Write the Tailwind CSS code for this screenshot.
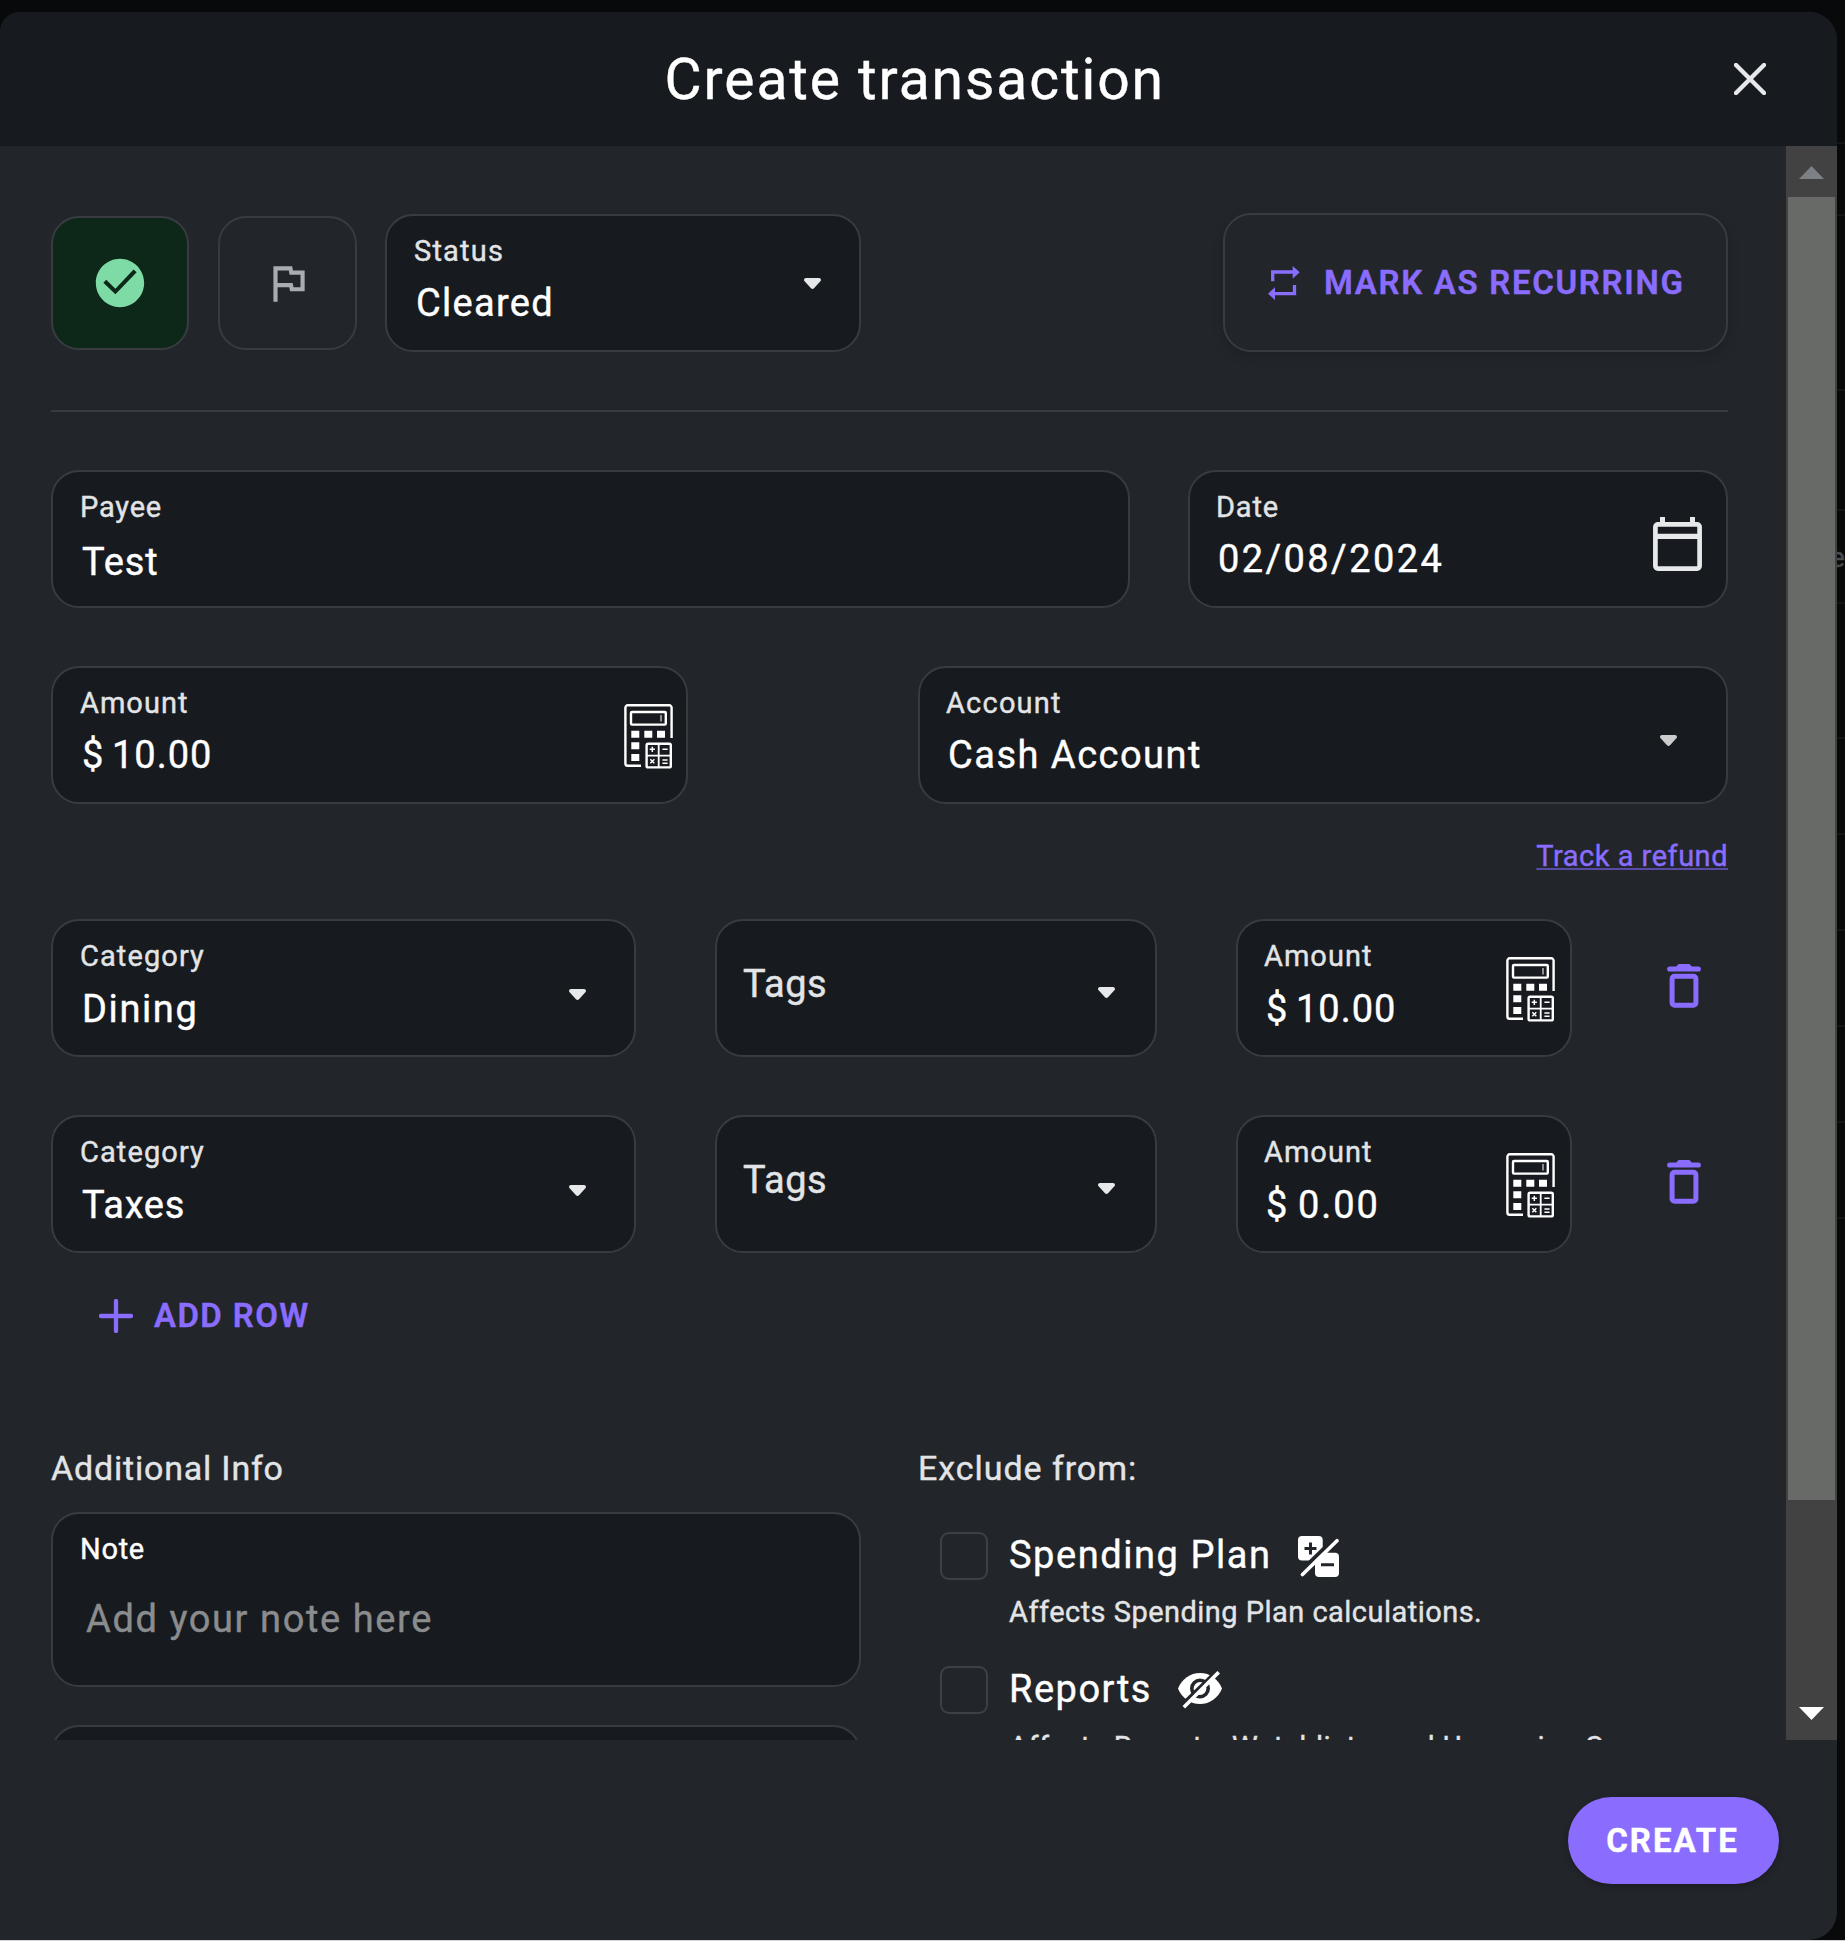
<!DOCTYPE html>
<html lang="en">
<head>
<meta charset="utf-8">
<title>Create transaction</title>
<script src="https://cdn.jsdelivr.net/npm/@tailwindcss/browser@4"></script>
</head>
<body class="h-[1941px] w-[1845px] overflow-hidden bg-[#08090b] font-['Roboto',sans-serif] [-webkit-text-stroke-width:0.4px]">
<svg class="hidden">
  <symbol id="calc" viewBox="0 0 49 65">
    <g fill="none" stroke="#fff" stroke-width="2.4">
      <path d="M47.600 34V3.600a2.300 2.300 0 0 0-2.300-2.300H3.700a2.300 2.300 0 0 0-2.300 2.300V59.400a2.300 2.300 0 0 0 2.300 2.300H17"/>
      <rect x="7" y="8" width="34.800" height="12.600" rx="1"/>
      <rect x="22.600" y="39.800" width="24.200" height="23.600" rx="1.500"/>
      <path d="M34.700 39.800v23.600M22.600 51.600h24.200" stroke-width="1.800"/>
      <path d="M28.300 42.700v5.200M25.700 45.300h5.200M38.400 45.300h5.200M26.300 55.300l4 4M30.300 55.300l-4 4M38.400 56h5.200M38.400 59.200h5.200" stroke-width="1.500"/>
      <path d="M37 11v6.500" stroke="#9a9c9e" stroke-width="1.800"/>
    </g>
    <path fill="#fff" d="M7.300 26.700h8v7h-8zM20.300 26.700h8v7h-8zM33 26.700h8v7h-8zM7.300 38.300h8v7h-8zM7.300 50h8v7h-8z"/>
  </symbol>
  <symbol id="caret" viewBox="0 0 17 11"><path fill="currentColor" d="M2 0h13c1.800 0 2.600 2 1.400 3.300L10 10.200c-.8.900-2.200.9-3 0L.6 3.300C-.6 2 .2 0 2 0z"/></symbol>
  <symbol id="trash" viewBox="0 0 34 44">
    <g fill="none" stroke="#8a6dff"><path d="M2.700 5h28.600" stroke-width="5.200" stroke-linecap="round"/><rect x="5.100" y="12.200" width="23.800" height="29" rx="2.500" stroke-width="5"/></g>
    <path fill="#8a6dff" d="M9 3l2.500-3h11L25 3z"/>
  </symbol>
</svg>
<div class="relative flex h-full flex-col justify-end">
  <!-- dimmed page behind the dialog -->
  <div class="absolute top-0 right-0 h-full w-2 overflow-hidden">
    <div class="absolute top-[142px] h-[2px] w-full bg-[#141517]"></div>
    <div class="absolute top-[214px] h-[2px] w-full bg-[#141517]"></div>
    <div class="absolute top-[389px] h-[2px] w-full bg-[#141517]"></div>
    <div class="absolute top-[509px] h-[2px] w-full bg-[#141517]"></div>
    <div class="absolute top-[602px] h-[2px] w-full bg-[#141517]"></div>
    <div class="absolute top-[737px] h-[2px] w-full bg-[#141517]"></div>
    <div class="absolute top-[833px] h-[2px] w-full bg-[#141517]"></div>
    <div class="absolute top-[929px] h-[2px] w-full bg-[#141517]"></div>
    <div class="absolute top-[1025px] h-[2px] w-full bg-[#141517]"></div>
    <div class="absolute top-[1121px] h-[2px] w-full bg-[#141517]"></div>
    <div class="absolute top-[1217px] h-[2px] w-full bg-[#141517]"></div>
    <div class="absolute top-[541px] -left-[7px] text-[28px] leading-[34px] text-[#4a4c4f]">e</div>
  </div>
  <div class="relative flex h-[1928px] w-[1837px] flex-col overflow-hidden rounded-r-[28px] rounded-tl-[20px] bg-[#22252a]">
    <header class="flex h-[134px] shrink-0 items-center justify-end bg-[#171a1e] pr-[71px]">
      <h1 class="mt-[2px] mr-[569px] whitespace-nowrap text-[57px] leading-[68px] tracking-[1.9px] text-white">Create transaction</h1>
      <svg class="size-[32px]" viewBox="0 0 32 32"><path d="M2 2l28 28M30 2L2 30" stroke="#e6e8ea" stroke-width="4.400" stroke-linecap="round"/></svg>
    </header>
    <div class="flex h-[1594px] shrink-0 overflow-hidden">
      <main class="flex w-[1786px] flex-col pt-[67px] pr-[58px] pl-[51px]">
        <div class="flex h-[139px] items-center">
          <button class="flex h-[134px] w-[138px] items-center justify-center rounded-[28px] border-2 border-[#383b3f] bg-[#0d2818]"><svg class="size-[58px]" viewBox="0 0 24 24" fill="#7fdba5"><path d="M12 2C6.500 2 2 6.500 2 12s4.500 10 10 10 10-4.500 10-10S17.500 2 12 2zm-1.900 14.700L5.100 11.900l1.200-1.200 3.800 3.700 7.500-8 1.300 1.200z"/></svg></button>
          <button class="ml-[29px] flex h-[134px] w-[139px] items-center justify-center rounded-[28px] border-2 border-[#383b3f]"><svg class="size-[50px]" viewBox="0 0 24 24" fill="#a9adb1"><path d="m12.360 6 .4 2H18v6h-3.360l-.4-2H7V6h5.360M14 4H5v17h2v-7h5.600l.4 2h7V6h-5.600L14 4z"/></svg></button>
          <div class="ml-[28px] flex h-[138px] w-[476px] justify-between rounded-[28px] border-2 border-[#383b3f] bg-[#171a1e] pt-[19px] pr-[38px] pl-[27px]">
            <div><span class="block w-max text-[29px] leading-[32px] tracking-[1.2px] text-[#e2e4e6]">Status</span><span class="mt-[14px] ml-[2px] block w-max text-[38px] leading-[44px] tracking-[1.3px] text-white">Cleared</span></div>
            <svg class="mt-[43px] h-[11px] w-[17px] text-[#e6e8ea]"><use href="#caret"/></svg>
          </div>
          <button class="ml-auto flex h-[139px] w-[505px] items-center rounded-[28px] border-2 border-[#383b3f] pl-[43px] shadow-[0_4px_12px_rgba(0,0,0,0.15)]">
            <svg class="h-[34px] w-[32px]" viewBox="0 0 32 34"><path d="M4.700 15.300V6H25M26.500 19v8.700H7" fill="none" stroke="#8a6dff" stroke-width="3.300"/><path fill="#8a6dff" d="M24.700 0l7 6.300-7 6.400zM7 21.300l-7 6.400L7 34z"/></svg>
            <span class="ml-[24px] whitespace-nowrap text-[33px] leading-[40px] font-semibold tracking-[1.7px] text-[#8a6dff]">MARK AS RECURRING</span>
          </button>
        </div>
        <div class="mt-[58px] h-[2px] shrink-0 bg-[#383b3f]"></div>

        <div class="mt-[58px] flex justify-between">
          <div class="h-[138px] w-[1079px] rounded-[28px] border-2 border-[#383b3f] bg-[#171a1e] pt-[19px] pl-[27px]">
            <span class="block w-max text-[29px] leading-[32px] tracking-[0.8px] text-[#e2e4e6]">Payee</span><span class="mt-[17px] ml-[2px] block w-max text-[38px] leading-[44px] tracking-[0.9px] text-white">Test</span>
          </div>
          <div class="flex h-[138px] w-[540px] justify-between rounded-[28px] border-2 border-[#383b3f] bg-[#171a1e] pt-[19px] pr-[24px] pl-[26px]">
            <div><span class="block w-max text-[29px] leading-[32px] tracking-[0.8px] text-[#e2e4e6]">Date</span><span class="mt-[14px] ml-[2px] block w-max text-[38px] leading-[44px] tracking-[2.4px] text-white">02/08/2024</span></div>
            <svg class="mt-[26px] h-[54px] w-[49px]" viewBox="0 0 49 54"><rect x="2.400" y="7.400" width="44.200" height="44.200" rx="2.500" fill="none" stroke="#e6e8ea" stroke-width="4.700"/><path fill="#e6e8ea" d="M7 0h5v7H7zM37 0h5v7h-5zM2 16.700h45V22H2z"/></svg>
          </div>
        </div>

        <div class="mt-[58px] flex justify-between">
          <div class="flex h-[138px] w-[637px] justify-between rounded-[28px] border-2 border-[#383b3f] bg-[#171a1e] pt-[19px] pr-[13px] pl-[27px]">
            <div><span class="block w-max text-[29px] leading-[32px] tracking-[1px] text-[#e2e4e6]">Amount</span><div class="mt-[14px] ml-[2px] flex text-[38px] leading-[44px] text-white"><span class="w-[30px]">$</span><span class="tracking-[1px]">10.00</span></div></div>
            <svg class="mt-[17px] h-[65px] w-[49px]"><use href="#calc"/></svg>
          </div>
          <div class="flex h-[138px] w-[810px] justify-between rounded-[28px] border-2 border-[#383b3f] bg-[#171a1e] pt-[19px] pr-[49px] pl-[26px]">
            <div><span class="block w-max text-[29px] leading-[32px] tracking-[1.2px] text-[#e2e4e6]">Account</span><span class="mt-[14px] ml-[2px] block w-max text-[38px] leading-[44px] tracking-[1.5px] text-white">Cash Account</span></div>
            <svg class="mt-[48px] h-[11px] w-[17px] text-[#cccccc]"><use href="#caret"/></svg>
          </div>
        </div>

        <div class="mt-[35px] flex h-[34px] justify-end"><a class="text-[29px] leading-[34px] tracking-[0.5px] text-[#8a6dff] underline decoration-[#5a4aa8] decoration-2 underline-offset-2">Track a refund</a></div>

        <div class="mt-[46px] flex">
          <div class="flex h-[138px] w-[585px] justify-between rounded-[28px] border-2 border-[#383b3f] bg-[#171a1e] pt-[19px] pr-[48px] pl-[27px]">
            <div><span class="block w-max text-[29px] leading-[32px] tracking-[1.1px] text-[#e2e4e6]">Category</span><span class="mt-[15px] ml-[2px] block w-max text-[38px] leading-[44px] tracking-[1.6px] text-white">Dining</span></div>
            <svg class="mt-[49px] h-[11px] w-[17px] text-[#e6e8ea]"><use href="#caret"/></svg>
          </div>
          <div class="ml-[79px] flex h-[138px] w-[442px] justify-between rounded-[28px] border-2 border-[#383b3f] bg-[#171a1e] pr-[40px] pl-[26px]">
            <span class="mt-[41px] block h-max w-max text-[38px] leading-[44px] tracking-[0.5px] text-[#e2e4e6]">Tags</span>
            <svg class="mt-[66px] h-[11px] w-[17px] text-[#e6e8ea]"><use href="#caret"/></svg>
          </div>
          <div class="ml-[79px] flex h-[138px] w-[336px] justify-between rounded-[28px] border-2 border-[#383b3f] bg-[#171a1e] pt-[19px] pr-[15px] pl-[26px]">
            <div><span class="block w-max text-[29px] leading-[32px] tracking-[1px] text-[#e2e4e6]">Amount</span><div class="mt-[15px] ml-[2px] flex text-[38px] leading-[44px] text-white"><span class="w-[30px]">$</span><span class="tracking-[1px]">10.00</span></div></div>
            <svg class="mt-[17px] h-[65px] w-[49px]"><use href="#calc"/></svg>
          </div>
          <svg class="mt-[45px] ml-[95px] h-[44px] w-[34px]"><use href="#trash"/></svg>
        </div>

        <div class="mt-[58px] flex">
          <div class="flex h-[138px] w-[585px] justify-between rounded-[28px] border-2 border-[#383b3f] bg-[#171a1e] pt-[19px] pr-[48px] pl-[27px]">
            <div><span class="block w-max text-[29px] leading-[32px] tracking-[1.1px] text-[#e2e4e6]">Category</span><span class="mt-[15px] ml-[2px] block w-max text-[38px] leading-[44px] tracking-[0.7px] text-white">Taxes</span></div>
            <svg class="mt-[49px] h-[11px] w-[17px] text-[#e6e8ea]"><use href="#caret"/></svg>
          </div>
          <div class="ml-[79px] flex h-[138px] w-[442px] justify-between rounded-[28px] border-2 border-[#383b3f] bg-[#171a1e] pr-[40px] pl-[26px]">
            <span class="mt-[41px] block h-max w-max text-[38px] leading-[44px] tracking-[0.5px] text-[#e2e4e6]">Tags</span>
            <svg class="mt-[66px] h-[11px] w-[17px] text-[#e6e8ea]"><use href="#caret"/></svg>
          </div>
          <div class="ml-[79px] flex h-[138px] w-[336px] justify-between rounded-[28px] border-2 border-[#383b3f] bg-[#171a1e] pt-[19px] pr-[15px] pl-[26px]">
            <div><span class="block w-max text-[29px] leading-[32px] tracking-[1px] text-[#e2e4e6]">Amount</span><div class="mt-[15px] ml-[2px] flex text-[38px] leading-[44px] text-white"><span class="w-[32px]">$</span><span class="tracking-[1.9px]">0.00</span></div></div>
            <svg class="mt-[17px] h-[65px] w-[49px]"><use href="#calc"/></svg>
          </div>
          <svg class="mt-[45px] ml-[95px] h-[44px] w-[34px]"><use href="#trash"/></svg>
        </div>

        <button class="mt-[43px] ml-[48px] flex h-[40px] items-center">
          <svg class="size-[34px]" viewBox="0 0 34 34"><path d="M17 2v30M2 17h30" stroke="#8a6dff" stroke-width="4.300" stroke-linecap="round"/></svg>
          <span class="ml-[21px] text-[33px] leading-[40px] font-semibold tracking-[1.4px] text-[#8a6dff]">ADD ROW</span>
        </button>

        <div class="mt-[112px] flex">
          <section class="w-[867px]">
            <h2 class="w-max text-[34px] leading-[40px] tracking-[0.8px] text-[#e2e4e6]">Additional Info</h2>
            <div class="mt-[24px] h-[175px] w-[810px] rounded-[28px] border-2 border-[#383b3f] bg-[#171a1e] pt-[19px] pl-[27px]">
              <span class="block w-max text-[29px] leading-[32px] tracking-[0.7px] text-white">Note</span>
              <span class="mt-[32px] ml-[6px] block w-max text-[38px] leading-[44px] tracking-[1.6px] text-[#8b8c8e]">Add your note here</span>
            </div>
            <div class="mt-[38px] h-[138px] w-[810px] rounded-[28px] border-2 border-[#383b3f] bg-[#171a1e]"></div>
          </section>
          <section class="w-[810px]">
            <h2 class="w-max text-[34px] leading-[40px] tracking-[0.95px] text-[#e2e4e6]">Exclude from:</h2>
            <div class="mt-[44px] flex items-center pl-[22px]">
              <span class="size-[48px] rounded-[9px] border-2 border-[#3d4044]"></span>
              <span class="-mt-[2px] ml-[21px] text-[38px] leading-[44px] tracking-[1.55px] text-white">Spending Plan</span>
              <svg class="ml-[27px] size-[41px]" viewBox="0 0 41 41"><rect width="24.700" height="24.500" rx="4" fill="#fff"/><rect x="17" y="16.700" width="24" height="24.300" rx="4" fill="#fff"/><path d="M12.500 6.500v12M6.500 12.500h12M23 28.800h13" stroke="#22252a" stroke-width="3"/><path d="M37.500 1.500L2 36" stroke="#22252a" stroke-width="4"/><path d="M39 4.700L4.500 38.500" stroke="#fff" stroke-width="3.600" stroke-linecap="round"/></svg>
            </div>
            <p class="mt-[15px] ml-[91px] w-max text-[29px] leading-[34px] tracking-[0.47px] text-[#e2e4e6]">Affects Spending Plan calculations.</p>
            <div class="mt-[37px] flex items-center pl-[22px]">
              <span class="size-[48px] rounded-[9px] border-2 border-[#3d4044]"></span>
              <span class="-mt-[2px] ml-[21px] text-[38px] leading-[44px] tracking-[1.5px] text-white">Reports</span>
              <svg class="ml-[26px] h-[38px] w-[44px]" viewBox="0 0 44 38"><path fill="#fff" d="M0 17.500C4 8 12 2 22 2s18 6 22 15.500C40 27 32 33 22 33S4 27 0 17.500z"/><circle cx="22" cy="17.500" r="8.200" fill="none" stroke="#22252a" stroke-width="3.600"/><path d="M39 0L4 34" stroke="#22252a" stroke-width="4"/><path d="M40.700 1.200L5.800 36.300" stroke="#fff" stroke-width="3.600"/></svg>
            </div>
            <p class="mt-[16px] ml-[91px] w-max text-[29px] leading-[34px] tracking-[0.47px] text-[#e2e4e6]">Affects Reports, Watchlists, and Upcoming S</p>
          </section>
        </div>
      </main>
      <div class="flex w-[51px] flex-col items-center bg-[#424242]">
        <svg class="mt-[20px] h-[13px] w-[25px] shrink-0" viewBox="0 0 25 13"><path fill="#7d8084" d="M12.500 0L25 13H0z"/></svg>
        <div class="mt-[18px] h-[1303px] w-[47px] shrink-0 bg-[#686a68]"></div>
        <svg class="mt-[207px] h-[13px] w-[25px] shrink-0" viewBox="0 0 25 13"><path fill="#fff" d="M12.500 13L0 0h25z"/></svg>
      </div>
    </div>
    <footer class="flex justify-end pt-[57px] pr-[58px]">
      <button class="h-[87px] w-[211px] rounded-full bg-[#8a6dff] pr-[2px] text-center text-white shadow-[0_2px_6px_rgba(0,0,0,0.25)]"><span class="text-[33px] leading-[40px] font-bold tracking-[2px]">CREATE</span></button>
    </footer>
  </div>
  <div class="h-px w-full shrink-0 bg-[#d5d5da]"></div>
</div>
</body>
</html>
